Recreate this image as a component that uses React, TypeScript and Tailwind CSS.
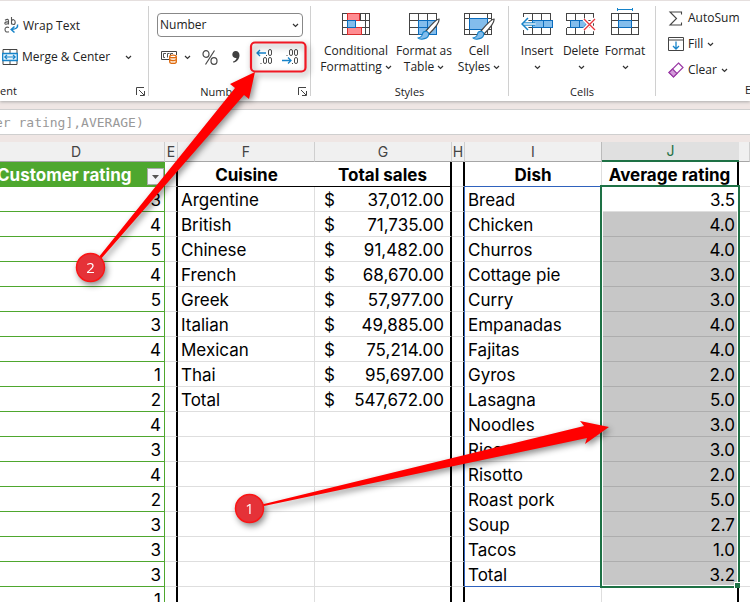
import React from "react";

const uiFont = "font-['Open_Sans','Noto_Sans',sans-serif]";
const gridFont = "font-['Inter','Liberation_Sans',sans-serif]";

function Chevron() {
  return (
    <svg width="7" height="5" viewBox="0 0 7 5" fill="none" stroke="#333" strokeWidth="1.2" className="shrink-0">
      <path d="M1 1l2.5 2.5L6 1" />
    </svg>
  );
}

function Launcher() {
  return (
    <svg width="9" height="9" viewBox="0 0 9 9" fill="none" stroke="#444" className="shrink-0">
      <path d="M.5 8V.5H8M3 3l5 5M8.5 4v4.5H4" />
    </svg>
  );
}

function WrapIcon() {
  return (
    <svg width="16" height="17" viewBox="0 0 16 17" fill="none" stroke="#555" strokeWidth="1.1">
      <path d="M1 3.2Q4.500 1.200 4.500 4V7.500M4.500 5Q.8 4.600.8 6.300T4.500 6.500M7.500 0v7.500M7.500 4Q8 2.500 9.600 2.700T11.200 5.200 9.500 7.500 7.500 6M5 10.500Q1 9.300 1 12.500T5 14.800" />
      <path d="M13.500 7.500Q14.500 12 7.500 12.500M10.500 9.500l-3.300 3 3.300 3" stroke="#1683c9" strokeWidth="1.500" />
    </svg>
  );
}

function MergeIcon() {
  return (
    <svg width="16" height="16" viewBox="0 0 16 16" fill="none">
      <path d="M1 .5h14v15H1zM8 .5v4M8 11.500v4" stroke="#444" />
      <path d="M.7 4.500h14.600v7H.7z" fill="#e9f5fd" stroke="#1683c9" strokeWidth="1.300" />
      <path d="M3 8h10M5 5.800L2.800 8 5 10.200M11 5.800L13.200 8 11 10.200" stroke="#1683c9" strokeWidth="1.200" />
    </svg>
  );
}

function AccountingIcon() {
  return (
    <svg width="17" height="14" viewBox="0 0 17 14" fill="none">
      <path d="M8 9.500H.5v-8h15V5" stroke="#444" />
      <path d="M5 3.500H2.500v4H4M8.500 3.500H6.500v4M12 3.500H9.500V5" stroke="#555" />
      <path d="M8.700 6.500v5.500c0 2 6.600 2 6.600 0V6.500" fill="#fce5cf" stroke="#dd6b10" strokeWidth="1.300" />
      <ellipse cx="12" cy="6.400" rx="3.300" ry="1.300" fill="#fff" stroke="#dd6b10" strokeWidth="1.200" />
      <path d="M8.700 9.300c0 1.700 6.600 1.700 6.600 0" stroke="#dd6b10" strokeWidth="1.200" />
    </svg>
  );
}

function PercentIcon() {
  return (
    <svg width="16" height="15" viewBox="0 0 16 15" fill="none" stroke="#484848" strokeWidth="1.200">
      <ellipse cx="4" cy="4" rx="3" ry="3.300" />
      <ellipse cx="12" cy="11" rx="3" ry="3.300" />
      <path d="M12.500.5l-9 14" />
    </svg>
  );
}

function CommaIcon() {
  return (
    <svg width="8" height="12" viewBox="0 0 8 12" fill="#404040">
      <path d="M3.700 0C6 0 7.500 1.700 7.500 4.300 7.500 8 5 11 1.500 11.800L1 10.600C3.200 9.800 4.400 8.600 4.500 7 2.300 7.400.3 6 .3 3.600.3 1.600 1.700 0 3.700 0z" />
    </svg>
  );
}

function DecimalIcon({ increase }: { increase: boolean }) {
  return (
    <svg width="18" height="16" viewBox="0 0 18 16" fill="none" stroke="#4b4b4b">
      {increase ? (
        <>
          <rect x="12.500" y=".5" width="3" height="6" rx="1.500" />
          <rect x="7.500" y="8.500" width="3" height="6" rx="1.500" />
          <rect x="12.500" y="8.500" width="3" height="6" rx="1.500" />
          <path d="M10 6.500h1M4.500 14.500h1" />
          <path d="M1 4h9M4 1L1 4l3 3" stroke="#1683c9" strokeWidth="1.300" />
        </>
      ) : (
        <>
          <rect x="7.500" y=".5" width="3" height="6" rx="1.500" />
          <rect x="12.500" y=".5" width="3" height="6" rx="1.500" />
          <rect x="12.500" y="8.500" width="3" height="6" rx="1.500" />
          <path d="M4.500 6.500h1M10 14.500h1" />
          <path d="M0 11.500h9M6 8.500l3 3-3 3" stroke="#1683c9" strokeWidth="1.300" />
        </>
      )}
    </svg>
  );
}

function Brush() {
  return (
    <g>
      <path d="M30 7Q27 7 17 19l3 3Q31 11 30 7z" fill="#fff" stroke="#444" strokeWidth="1.200" />
      <path d="M9 26q4-1 4.500-4t4-2.500q3 1 2 4T13 27.200Q10 27.300 9 26z" fill="#83bdec" stroke="#1683c9" strokeWidth="1.100" />
    </g>
  );
}

function ConditionalIcon() {
  return (
    <svg width="28" height="28" viewBox="0 0 28 28" fill="none" shapeRendering="crispEdges">
      <path d="M.5 1.500h27v21H.5zM.5 8.500h27M.5 15.500h27M5.500 1v21M18.500 1v21M23.500 1v21" stroke="#444" />
      <path d="M5.500 8.500h13v7h-13z" fill="#fff" />
      <path d="M5.500 1.500h12v7h-12zM5.500 15.500h14v7h-14z" fill="#ff8c91" stroke="#d92d2d" />
      <path d="M5.500 8.500h8v7h-8z" fill="#83bdec" stroke="#0b6cbd" />
    </svg>
  );
}

function FormatTableIcon() {
  return (
    <svg width="31" height="28" viewBox="0 0 31 28" fill="none">
      <g shapeRendering="crispEdges">
        <path d="M.5 1.500h27v21H.5zM.5 8.500h27M.5 15.500h27M9.500 1v21M18.500 1v21" stroke="#444" />
        <path d="M9.500 8.500h18v14h-18z" fill="#83bdec" />
        <path d="M9.500 22.500v-14h18v14zM9.500 15.500h18M18.500 8.500v14" stroke="#0b6cbd" />
      </g>
      <Brush />
    </svg>
  );
}

function CellStylesIcon() {
  return (
    <svg width="31" height="28" viewBox="0 0 31 28" fill="none">
      <g shapeRendering="crispEdges">
        <path d="M.5 1.500h27v21H.5zM.5 6.500h27M.5 17.500h27M5.500 1v21M23.500 1v21" stroke="#444" />
        <path d="M5.500 6.500h18v11h-18z" fill="#83bdec" stroke="#0b6cbd" />
      </g>
      <Brush />
    </svg>
  );
}

function InsertIcon() {
  return (
    <svg width="32" height="28" viewBox="0 0 32 28" fill="none">
      <g shapeRendering="crispEdges">
        <path d="M2.500 5V1.500h27v21h-27V18M2.500 8.500h27M2.500 15.500h27M11.500 1v21M20.500 1v21" stroke="#444" />
        <path d="M11.500 8.500h20v7h-20z" fill="#83bdec" stroke="#0b6cbd" />
        <path d="M22.500 8.500v7" stroke="#0b6cbd" />
      </g>
      <path d="M7 6l-6 6 6 6" stroke="#fff" strokeWidth="4" />
      <path d="M2 12h12" stroke="#1683c9" strokeWidth="3.400" />
      <path d="M2 12h12.500" stroke="#fff" strokeWidth="1.400" />
      <path d="M7 6l-6 6 6 6" stroke="#1683c9" strokeWidth="1.500" />
    </svg>
  );
}

function DeleteIcon() {
  return (
    <svg width="30" height="28" viewBox="0 0 30 28" fill="none">
      <g shapeRendering="crispEdges">
        <path d="M.5 8.500v-7h27v21H.5v-7M.5 8.500h27M.5 15.500h27M9.500 1v7M18.500 1v7M9.500 15v7M18.500 15v7" stroke="#444" />
      </g>
      <path d="M4.500 8.500h13l3 3.500-3 3.500h-13z" fill="#83bdec" stroke="#0b6cbd" />
      <path d="M13.500 8.500v7" stroke="#0b6cbd" />
      <path d="M18 7l11 11M29 7L18 18" stroke="#fff" strokeWidth="4" />
      <path d="M18 7l11 11M29 7L18 18" stroke="#e8343c" strokeWidth="1.300" />
    </svg>
  );
}

function FormatIcon() {
  return (
    <svg width="28" height="32" viewBox="0 0 28 32" fill="none" shapeRendering="crispEdges">
      <path d="M.5 5.500h27v21H.5zM.5 12.500h27M.5 19.500h27M7.500 5v21M20.500 5v21" stroke="#444" />
      <path d="M7.500 12.500h13v7h-13z" fill="#83bdec" stroke="#0b6cbd" />
      <path d="M6.500 1.500h15M6.500 0v3M21.500 0v3" stroke="#1683c9" />
    </svg>
  );
}

function SigmaIcon() {
  return (
    <svg width="16" height="15" viewBox="0 0 16 15" fill="none" stroke="#444" strokeWidth="1.100">
      <path d="M13.500 3.500V1H2l6.500 6.500L2 14h11.500v-2.500" />
    </svg>
  );
}

function FillIcon() {
  return (
    <svg width="16" height="15" viewBox="0 0 16 15" fill="none">
      <path d="M.5.500h15v13H.5zM.5 3h15" stroke="#444" />
      <path d="M8 4.500V12M5 9l3 3 3-3" stroke="#1683c9" strokeWidth="1.300" />
    </svg>
  );
}

function EraserIcon() {
  return (
    <svg width="16" height="16" viewBox="0 0 16 16" fill="none" stroke="#9a3aa5" strokeWidth="1.200">
      <path d="M10.500 1L15 5.500 5.500 15 1 10.500z" fill="#fff" />
      <path d="M4.500 7L9 11.500 5.500 15 1 10.500z" fill="#d39bd9" />
    </svg>
  );
}

type BigProps = { icon: React.ReactNode; top: string; bottom?: string; width: string };

function BigButton({ icon, top, bottom, width }: BigProps) {
  return (
    <button type="button" className={`flex shrink-0 flex-col items-center text-xs leading-4 ${width}`}>
      <span className="flex h-8 items-end">{icon}</span>
      <span className="mt-[3px] whitespace-nowrap">{top}</span>
      <span className="flex h-4 items-center gap-[3px] whitespace-nowrap">
        {bottom}
        <Chevron />
      </span>
    </button>
  );
}

function Group({ label, className, launcher, children }: { label: string; className: string; launcher?: boolean; children: React.ReactNode }) {
  return (
    <section aria-label={label} className={`relative flex flex-col justify-between ${className}`}>
      {children}
      <div className={`flex h-[17px] items-center text-[11px] leading-4 ${launcher ? "pr-4" : ""}`}>
        <span className="flex-1 text-center">{label}</span>
        {launcher && (
          <button type="button" aria-label="More options" className="absolute right-[3px]">
            <Launcher />
          </button>
        )}
      </div>
    </section>
  );
}

function Divider() {
  return <div className="mt-[5px] mb-[5px] w-px shrink-0 bg-[#d0d0d0]" />;
}

function Ribbon() {
  return (
    <header className={`flex h-[101px] shrink-0 border-t border-[#e5dfde] bg-white text-[#222] shadow-[0_1px_3px_#aaa] ${uiFont}`}>
      <section aria-label="Alignment" className="flex w-[148px] shrink-0 flex-col text-xs">
        <button type="button" className="mt-4 ml-1 flex h-[17px] items-center gap-[3px] whitespace-nowrap">
          <WrapIcon />
          Wrap Text
        </button>
        <button type="button" className="mt-[15px] ml-[2px] flex h-4 items-center gap-1 whitespace-nowrap">
          <MergeIcon />
          <span className="w-[99px] text-left">Merge &amp; Center</span>
          <Chevron />
        </button>
        <div className="mt-auto mb-px flex h-[17px] items-center justify-between pr-[3px] text-[11px]">
          <span>ent</span>
          <button type="button" aria-label="Alignment settings">
            <Launcher />
          </button>
        </div>
      </section>
      <Divider />
      <Group label="Number" launcher className="w-[161px] shrink-0 pb-px">
        <div className="px-2 pt-3">
          <div className="relative">
            <select aria-label="Number format" className="block h-6 w-[146px] appearance-none rounded border border-[#888] bg-white px-[2px] text-xs text-[#222]">
              <option>Number</option>
            </select>
            <span className="pointer-events-none absolute top-[10px] left-[135px]">
              <Chevron />
            </span>
          </div>
          <div className="mt-[6px] flex h-7 items-center pl-1">
            <button type="button" aria-label="Accounting format" className="flex items-center gap-[6px]">
              <AccountingIcon />
              <Chevron />
            </button>
            <button type="button" aria-label="Percent" className="ml-[11px]">
              <PercentIcon />
            </button>
            <button type="button" aria-label="Comma" className="ml-[14px]">
              <CommaIcon />
            </button>
            <button type="button" aria-label="Increase decimal" className="ml-4">
              <DecimalIcon increase />
            </button>
            <button type="button" aria-label="Decrease decimal" className="ml-2">
              <DecimalIcon increase={false} />
            </button>
          </div>
        </div>
      </Group>
      <Divider />
      <Group label="Styles" className="w-[197px] shrink-0 pb-px">
        <div className="flex pt-[7px] pl-2">
          <BigButton width="w-[74px]" icon={<ConditionalIcon />} top="Conditional" bottom="Formatting" />
          <BigButton width="w-[62px]" icon={<FormatTableIcon />} top="Format as" bottom="Table" />
          <BigButton width="w-12" icon={<CellStylesIcon />} top="Cell" bottom="Styles" />
        </div>
      </Group>
      <Divider />
      <Group label="Cells" className="w-[146px] shrink-0 pb-px">
        <div className="flex pt-[7px] pl-[6px]">
          <BigButton width="w-11" icon={<InsertIcon />} top="Insert" />
          <BigButton width="w-11" icon={<DeleteIcon />} top="Delete" />
          <BigButton width="w-11" icon={<FormatIcon />} top="Format" />
        </div>
      </Group>
      <Divider />
      <section aria-label="Editing" className="flex min-w-0 flex-1 flex-col overflow-hidden pl-3 text-xs">
        <button type="button" className="mt-2 flex h-[18px] items-center gap-1 whitespace-nowrap">
          <SigmaIcon />
          AutoSum
        </button>
        <button type="button" className="mt-2 flex h-[18px] items-center gap-1">
          <FillIcon />
          Fill
          <Chevron />
        </button>
        <button type="button" className="mt-2 flex h-[18px] items-center gap-1">
          <EraserIcon />
          Clear
          <Chevron />
        </button>
        <div className="mt-auto mb-px h-[17px] pl-[77px] text-[11px]">E</div>
      </section>
    </header>
  );
}

const ratings = [3, 4, 5, 4, 5, 3, 4, 1, 2, 4, 3, 4, 2, 3, 3, 3, 1];

const sales = [
  ["Argentine", "37,012.00"],
  ["British", "71,735.00"],
  ["Chinese", "91,482.00"],
  ["French", "68,670.00"],
  ["Greek", "57,977.00"],
  ["Italian", "49,885.00"],
  ["Mexican", "75,214.00"],
  ["Thai", "95,697.00"],
  ["Total", "547,672.00"],
];

const dishes = [
  ["Bread", "3.5"],
  ["Chicken", "4.0"],
  ["Churros", "4.0"],
  ["Cottage pie", "3.0"],
  ["Curry", "3.0"],
  ["Empanadas", "4.0"],
  ["Fajitas", "4.0"],
  ["Gyros", "2.0"],
  ["Lasagna", "5.0"],
  ["Noodles", "3.0"],
  ["Rice", "3.0"],
  ["Risotto", "2.0"],
  ["Roast pork", "5.0"],
  ["Soup", "2.7"],
  ["Tacos", "1.0"],
  ["Total", "3.2"],
];

const line = "border-b border-b-[#dedede] p-0 pt-[2px] whitespace-nowrap";
const thick = "border-r-2 border-r-black";
const thin = "border-r border-r-[#dedede]";
const letter = "h-5 border-b border-b-[#a6a6a6] border-r border-r-[#cfcfcf] bg-[#f0f0f0] p-0 text-center font-normal";

function Sheet() {
  return (
    <main className={`relative min-h-0 flex-1 overflow-hidden bg-white ${gridFont}`}>
      <table className="w-full table-fixed border-separate border-spacing-0 text-[17px] leading-[22px] text-black">
        <colgroup>
          <col className="w-[165px]" />
          <col className="w-[13px]" />
          <col className="w-[137px]" />
          <col className="w-[137px]" />
          <col className="w-[13px]" />
          <col className="w-[137px]" />
          <col className="w-[137px]" />
          <col />
        </colgroup>
        <thead>
          <tr className="text-sm leading-[18px] text-[#444]">
            <th className={letter}><span className="pr-3">D</span></th>
            <th className={letter}>E</th>
            <th className={letter}>F</th>
            <th className={letter}>G</th>
            <th className={letter}>H</th>
            <th className={letter}>I</th>
            <th className="h-5 border-b-2 border-b-[#1e7145] bg-[#e0e0e0] p-0 font-normal text-[#1e7145] shadow-[-1px_0_0_#bbb]">J</th>
            <th className={letter} aria-label="K" />
          </tr>
          <tr className="h-[25px] font-bold">
            <th className="border-r border-r-[#4ea72e] border-b border-b-[#4ea72e] bg-[#4ea72e] p-0 whitespace-nowrap text-white">
              <div className="flex h-6 items-end justify-between">
                <span className="-ml-[3px]">Customer rating</span>
                <button type="button" aria-label="Filter Customer rating" className="mb-px flex h-[17px] w-[17px] shrink-0 items-center justify-center border border-[#aaa] bg-[#f5f6fa]">
                  <svg width="7" height="4" viewBox="0 0 7 4" fill="#555"><path d="M0 0h7L3.500 4z" /></svg>
                </button>
              </div>
            </th>
            <th className={`${line} ${thick}`} />
            <th className="border-b border-black p-0 pt-[2px]">Cuisine</th>
            <th className="border-r-2 border-b border-black p-0 pt-[2px]">Total sales</th>
            <th className={`${line} ${thick}`} />
            <th className={`${line} ${thin}`}>Dish</th>
            <th className={`${line} ${thick}`}>Average rating</th>
            <th className={line} />
          </tr>
        </thead>
        <tbody>
          {ratings.map((rating, i) => {
            const sale = sales[i];
            const dish = dishes[i];
            return (
              <tr key={i} className="h-[25px]">
                <td className="border-r border-b border-[#4ea72e] p-0 pt-[2px] pr-[3px] text-right">{rating}</td>
                <td className={`${line} ${thick}`} />
                <td className={`${line} ${thin} pl-[3px]`}>{sale?.[0]}</td>
                <td className={`${line} ${thick}`}>
                  {sale && (
                    <div className="flex justify-between pr-[6px] pl-[9px]">
                      <span>$</span>
                      <span>{sale[1]}</span>
                    </div>
                  )}
                </td>
                <td className={`${line} ${thick}`} />
                <td className={`${line} ${thin} pl-[3px]`}>{dish?.[0]}</td>
                <td className={`border-b p-0 pt-[2px] pr-[2px] text-right ${thick} ${dish && i > 0 ? "border-b-[#adadad] bg-[#c7c7c7]" : "border-b-[#dedede]"}`}>
                  {dish?.[1]}
                </td>
                <td className={line} />
              </tr>
            );
          })}
        </tbody>
      </table>
      <div className="pointer-events-none absolute top-11 left-[464px] h-[401px] w-[138px] border border-[#2f62bd]" />
      <div className="pointer-events-none absolute top-[43px] left-[600px] h-[403px] w-[140px] border-2 border-[#1e7145]">
        <div className="h-full border border-white" />
        <div className="absolute -right-[2px] -bottom-[2px] h-[6px] w-[6px] border-t border-l border-white bg-[#1e7145]" />
      </div>
    </main>
  );
}

function Annotations() {
  return (
    <svg width="750" height="602" viewBox="0 0 750 602" className="pointer-events-none absolute top-0 left-0 font-['Open_Sans',sans-serif] drop-shadow-[2px_3px_3px_rgba(0,0,0,0.45)]">
      <rect x="251" y="42.500" width="54.500" height="29" rx="4" fill="none" stroke="#f01824" strokeWidth="2.200" />
      <path d="M98 258l137-170-5-4 25-12-6 27-5-4L100 260z" fill="#f00" />
      <path d="M262 504.500L584 426l-4-5 29 6-24 17 2-6-323 68z" fill="#f00" />
      <circle cx="90.500" cy="267.500" r="14" fill="#e53238" stroke="#fb1515" strokeWidth="1.500" />
      <circle cx="249.500" cy="508.500" r="14" fill="#e53238" stroke="#fb1515" strokeWidth="1.500" />
      <text x="90.500" y="273" textAnchor="middle" fontSize="15" fill="#fff">2</text>
      <text x="249.500" y="514" textAnchor="middle" fontSize="15" fill="#fff">1</text>
    </svg>
  );
}

export default function App() {
  return (
    <div className="relative flex h-screen flex-col overflow-hidden bg-[#efe6e4]">
      <Ribbon />
      <div className="mt-2 mb-[7px] h-[26px] shrink-0 overflow-hidden border-y border-[#cfcfcf] bg-white">
        <input
          aria-label="Formula"
          readOnly
          value="er rating],AVERAGE)"
          className="-ml-[5px] block h-6 w-full bg-transparent font-['DejaVu_Sans_Mono',monospace] text-[13px] text-[#999] outline-none"
        />
      </div>
      <Sheet />
      <Annotations />
    </div>
  );
}
